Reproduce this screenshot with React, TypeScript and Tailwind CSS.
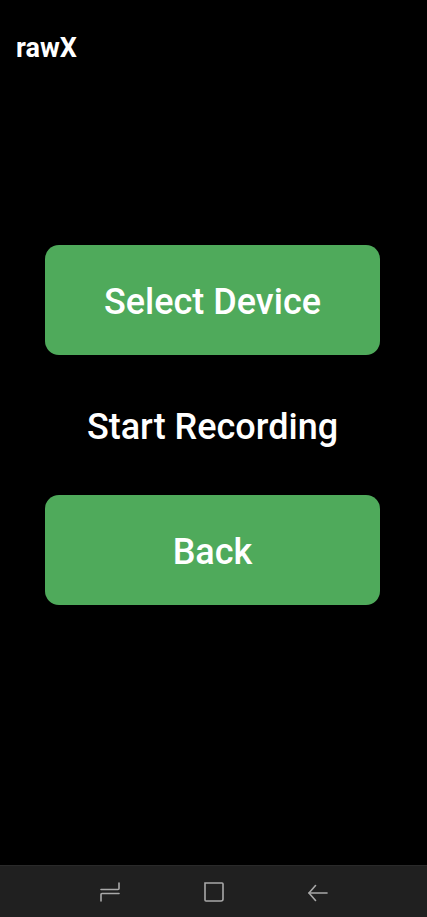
import React from 'react';

function NavBar() {
  return (
    <div className="h-[52px] bg-[#202020] border-t border-[#2a2a2a] flex items-center justify-center gap-[84px]">
      <svg width="20" height="20" viewBox="0 0 20 20" fill="none" stroke="#a8a8a8" strokeWidth="1.6" strokeLinecap="round">
        <path d="M19 1v5.5a1 1 0 0 1-1 1H1" />
        <path d="M1 19v-6.5a1 1 0 0 1 1-1h17" />
      </svg>
      <svg width="20" height="20" viewBox="0 0 20 20" fill="none" stroke="#a8a8a8" strokeWidth="1.6">
        <path d="M1 1h17a1 1 0 0 1 1 1v15a2 2 0 0 1-2 2H2a1 1 0 0 1-1-1z" />
      </svg>
      <svg width="20" height="20" viewBox="0 0 20 20" fill="none" stroke="#a8a8a8" strokeWidth="1.6" strokeLinecap="round" strokeLinejoin="round">
        <path d="M19 11H1" />
        <path d="M7.5 3.5L1 11l6.5 7.5" />
      </svg>
    </div>
  );
}

export default function App() {
  return (
    <div className="w-[427px] h-[917px] bg-black flex flex-col font-['Roboto',sans-serif] text-white">
      <div className="flex-1 flex flex-col">
        <div className="pl-[16px] pt-[35px] text-[27px] font-bold leading-none">rawX</div>
        <div className="flex flex-col items-start pl-[45px] mt-[183px]">
          <button className="w-[335px] h-[110px] pt-[4px] rounded-[14px] bg-[#4faa5b] text-[36px] font-medium">Select Device</button>
          <div className="w-[335px] h-[140px] pt-[4px] flex items-center justify-center text-[36px] font-medium">Start Recording</div>
          <button className="w-[335px] h-[110px] pt-[4px] rounded-[14px] bg-[#4faa5b] text-[36px] font-medium">Back</button>
        </div>
      </div>
      <NavBar />
    </div>
  );
}
